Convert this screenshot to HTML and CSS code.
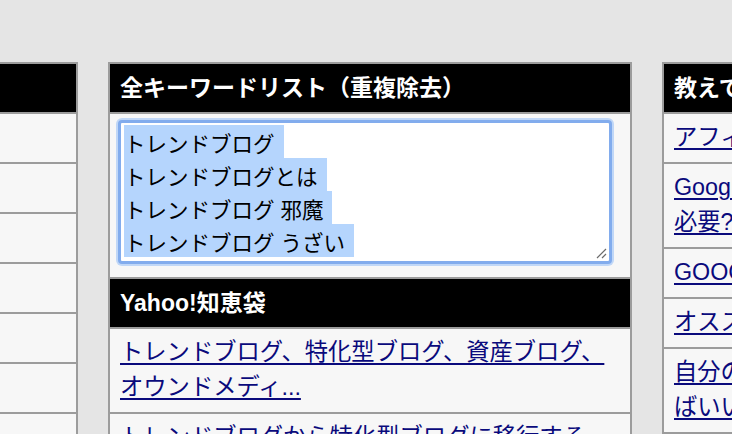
FILE: index.html
```
<!DOCTYPE html>
<html lang="ja">
<head>
<meta charset="utf-8">
<title>キーワードリスト</title>
<link rel="stylesheet" href="styles.css">
</head>
<body>
<div class="page">
  <div class="columns">
    <section class="col">
      <h2 class="col-title">Googleサジェスト</h2>
      <ul class="list">
        <li><a href="#">トレンドブログ とは</a></li>
        <li><a href="#">トレンドブログ 邪魔</a></li>
        <li><a href="#">トレンドブログ うざい</a></li>
        <li><a href="#">トレンドブログ 稼げない</a></li>
        <li><a href="#">トレンドブログ 終わり</a></li>
        <li><a href="#">トレンドブログ ネタ</a></li>
        <li><a href="#">トレンドブログ 収入</a></li>
      </ul>
    </section>

    <section class="col">
      <h2 class="col-title">全キーワードリスト（重複除去）</h2>
      <div class="kw-box">
        <div class="kw-area">
          <div class="kw-line">トレンドブログ</div>
          <div class="kw-line">トレンドブログとは</div>
          <div class="kw-line">トレンドブログ 邪魔</div>
          <div class="kw-line">トレンドブログ うざい</div>
          <svg class="grip" width="12" height="12" viewBox="0 0 12 12" aria-hidden="true">
            <path d="M11 2 L2 11 M11 7 L7 11" stroke="#6b6b6b" stroke-width="1.2" fill="none"/>
          </svg>
        </div>
      </div>
      <h2 class="col-title">Yahoo!知恵袋</h2>
      <ul class="list">
        <li><a href="#">トレンドブログ、特化型ブログ、資産ブログ、オウンドメディ...</a></li>
        <li><a href="#">トレンドブログから特化型ブログに移行する...</a></li>
      </ul>
    </section>

    <section class="col">
      <h2 class="col-title">教えて!goo</h2>
      <ul class="list">
        <li><a href="#">アフィリエイトとトレンドブログ</a></li>
        <li><a href="#">Googleアドセンスのトレンドブログに<br>必要?</a></li>
        <li><a href="#">GOOGLEアドセンスの審査</a></li>
        <li><a href="#">オススメのトレンドブログ</a></li>
        <li><a href="#">自分のブログのジャンルは何にすれ<br>ばいいですか?</a></li>
      </ul>
    </section>
  </div>
</div>
</body>
</html>
```

FILE: styles.css
```
html, body {
  margin: 0;
  height: 100%;
  overflow: hidden;
  background: #e5e5e5;
}

body {
  font-family: "Liberation Sans", "Noto Sans CJK JP", sans-serif;
  color: #000;
}

.page {
  padding-top: 62px;
}

.columns {
  display: flex;
  gap: 30px;
  align-items: flex-start;
  margin-left: -446px;
}

.col {
  flex: 0 0 524px;
  box-sizing: border-box;
  border: 2px solid #9c9c9c;
  border-bottom: none;
  background: #f7f7f7;
}

.col-title {
  margin: 0;
  height: 48px;
  padding: 0 10px;
  background: #000;
  color: #fff;
  font-size: 23px;
  font-weight: bold;
  line-height: 48px;
  white-space: nowrap;
  overflow: hidden;
  border-bottom: 2px solid #9c9c9c;
}

.list {
  list-style: none;
  margin: 0;
  padding: 0;
}

.list li {
  padding: 6px 10px 7px;
  font-size: 23.3px;
  line-height: 35px;
  border-bottom: 2px solid #9c9c9c;
}

.list a {
  color: #0a0a7c;
  text-decoration: underline;
  text-decoration-thickness: 2px;
  text-underline-offset: 3px;
}

.kw-box {
  padding: 6px 0 13px;
  border-bottom: 2px solid #9c9c9c;
}

.kw-area {
  position: relative;
  box-sizing: border-box;
  width: 95%;
  height: 144px;
  margin-left: 8px;
  padding: 2px 3px;
  overflow: hidden;
  background: #fff;
  border: 3px solid #82aced;
  border-radius: 4px;
  box-shadow: 0 0 0 2px #c0d7f7;
  font-size: 21.5px;
}

.kw-line {
  width: fit-content;
  padding: 7px 9px 0 0;
  line-height: 26px;
  white-space: pre;
  background: #b5d5fd;
}

.grip {
  position: absolute;
  right: 2px;
  bottom: 2px;
}
```
